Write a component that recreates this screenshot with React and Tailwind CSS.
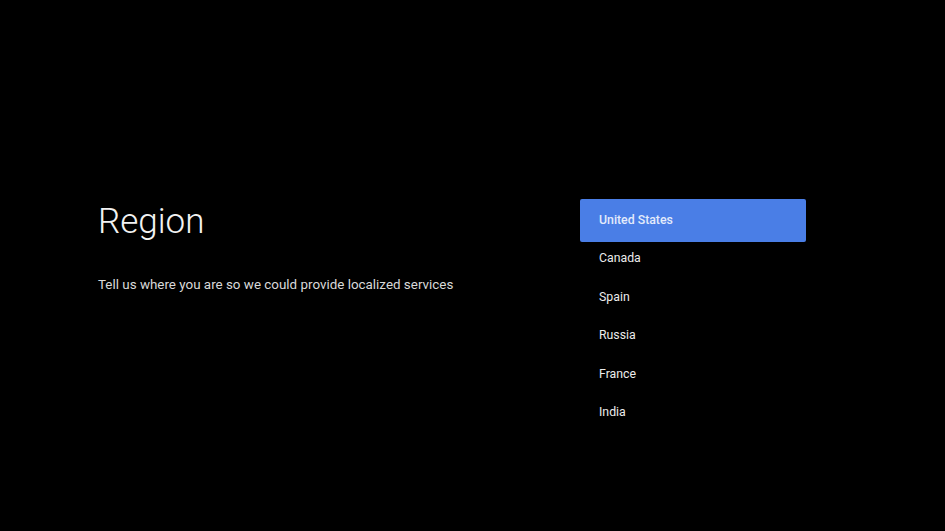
import React from "react";

const items = ["United States", "Canada", "Spain", "Russia", "France", "India"];

export default function App() {
  return (
    <div className="w-[945px] h-[531px] bg-black flex text-white" style={{ fontFamily: "Roboto, sans-serif" }}>
      <div className="w-[580px] shrink-0 pl-[98px] pt-[200px] flex flex-col">
        <h1 className="text-[35px] leading-[44px] font-light text-[#f2f2f2]">Region</h1>
        <p className="mt-[31px] text-[13.4px] leading-[20px] text-[#d9d9d9]">
          Tell us where you are so we could provide localized services
        </p>
      </div>
      <div className="pt-[199px] w-[226px] shrink-0 flex flex-col">
        {items.map((name, i) =>
          i === 0 ? (
            <div
              key={name}
              className="h-[43px] mb-[-2.6px] rounded-[2px] bg-[#4a7ee6] flex items-center pl-[19px] text-[12.3px] font-medium text-[#e3ebfb]"
            >
              {name}
            </div>
          ) : (
            <div
              key={name}
              className="h-[38.4px] flex items-center pl-[19px] text-[12.3px] font-normal text-[#ececec]"
            >
              {name}
            </div>
          )
        )}
      </div>
    </div>
  );
}
